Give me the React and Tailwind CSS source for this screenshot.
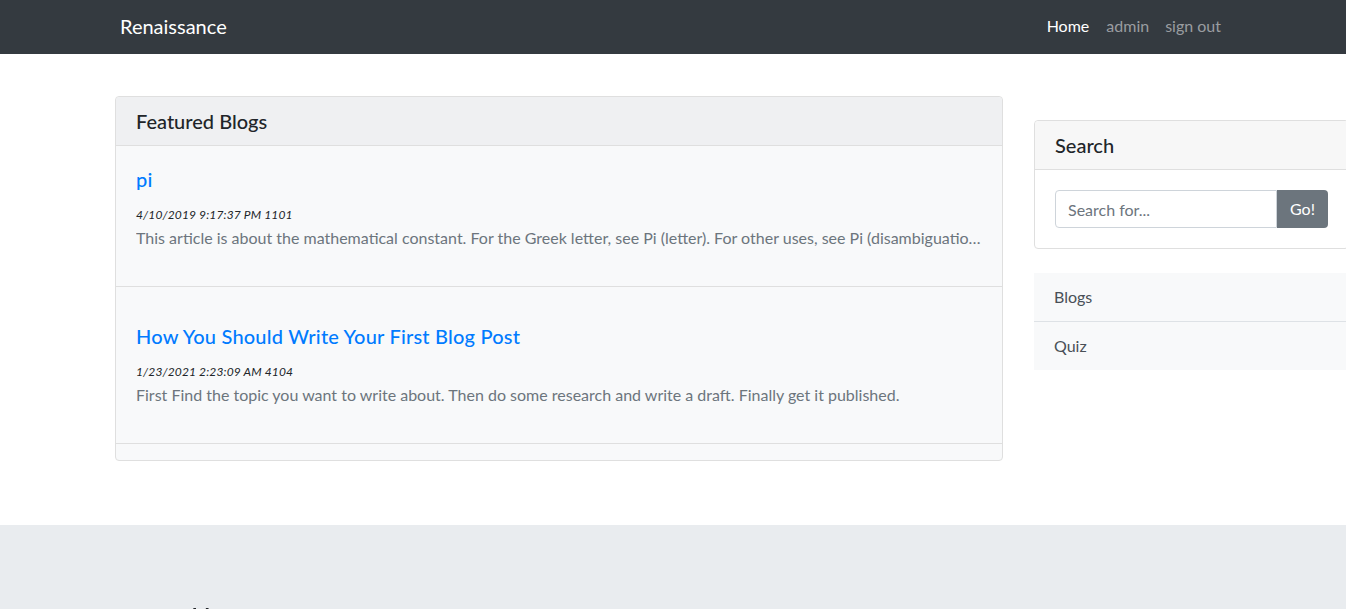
import React from "react";

const font = { fontFamily: "Lato, 'Open Sans', sans-serif" };

function BlogItem({ title, date, text, first }) {
  return (
    <div className={`border-b border-[#dfdfdf] px-5 pb-[36px] ${first ? "pt-[21px]" : "pt-[37px]"}`}>
      <a href="#" className="block text-[20px] leading-[24px] font-medium tracking-[0.2px] text-[#007bff]">{title}</a>
      <div className="mt-[15px] text-[12px] leading-[18px] italic tracking-[0.15px] text-[#212529]">{date}</div>
      <p className="mt-[2px] truncate text-[16px] leading-[24px] text-[#6c757d]">{text}</p>
    </div>
  );
}

export default function App() {
  return (
    <div className="w-full overflow-x-hidden bg-white text-[#212529]" style={font}>
      <nav className="h-[54px] bg-[#343a40]">
        <div className="mx-auto flex h-full w-[1140px] items-center justify-between px-[15px]">
          <a href="#" className="-mt-[2px] pl-[2px] text-[20px] leading-[30px] text-white">Renaissance</a>
          <div className="-mt-[2px] flex items-center text-[16px] leading-[24px]">
            <a href="#" className="pl-2 pr-[9px] text-white">Home</a>
            <a href="#" className="px-2 text-[#9a9da0]">admin</a>
            <a href="#" className="pl-2 pr-[7px] text-[#9a9da0]">sign out</a>
          </div>
        </div>
      </nav>

      <main className="flex items-start pt-[42px]">
        <section className="ml-[115px] w-[888px] shrink-0 rounded border border-[#dfdfdf] bg-[#f8f9fa]">
          <div className="flex h-[49px] items-center rounded-t border-b border-[#dfdfdf] bg-[#eff0f2] px-5">
            <h5 className="text-[20px] font-medium leading-[24px] text-[#212529]">Featured Blogs</h5>
          </div>
          <div className="pb-4">
            <BlogItem
              first
              title="pi"
              date="4/10/2019 9:17:37 PM 1101"
              text="This article is about the mathematical constant. For the Greek letter, see Pi (letter). For other uses, see Pi (disambiguation). The number π is a mathematical constant."
            />
            <BlogItem
              title="How You Should Write Your First Blog Post"
              date="1/23/2021 2:23:09 AM 4104"
              text="First Find the topic you want to write about. Then do some research and write a draft. Finally get it published."
            />
          </div>
        </section>

        <aside className="ml-[31px] mt-[24px] w-[315px] shrink-0">
          <div className="rounded border border-[#dfdfdf] bg-white">
            <div className="flex h-[49px] items-center rounded-t border-b border-[#dfdfdf] bg-[#f7f7f7] px-5">
              <h5 className="text-[20px] font-medium leading-[24px] text-[#212529]">Search</h5>
            </div>
            <div className="flex p-5">
              <input
                type="text"
                placeholder="Search for..."
                className="h-[38px] min-w-0 flex-1 rounded-l border border-[#ced4da] bg-white px-3 text-[16px] text-[#495057] placeholder:text-[#6c757d] outline-none"
              />
              <button className="h-[38px] w-[51px] rounded-r bg-[#6c757d] text-[16px] text-white">Go!</button>
            </div>
          </div>
          <ul className="mt-6 bg-[#f8f9fa] text-[16px] text-[#495057]">
            <li className="flex h-[49px] items-center border-b border-[#dee2e6] px-5">Blogs</li>
            <li className="flex h-[48px] items-center px-5">Quiz</li>
          </ul>
        </aside>
      </main>

      <footer className="mt-16 bg-[#e9ecef] pb-16 pt-[68px]">
        <div className="mx-auto w-[1140px] px-[15px]">
          <h1 className="text-[56px] font-light leading-[67px] text-[#212529]">Hello, Renaissance!</h1>
          <p className="mt-4 text-[20px] font-light">Read blogs and take quizzes.</p>
        </div>
      </footer>
    </div>
  );
}
